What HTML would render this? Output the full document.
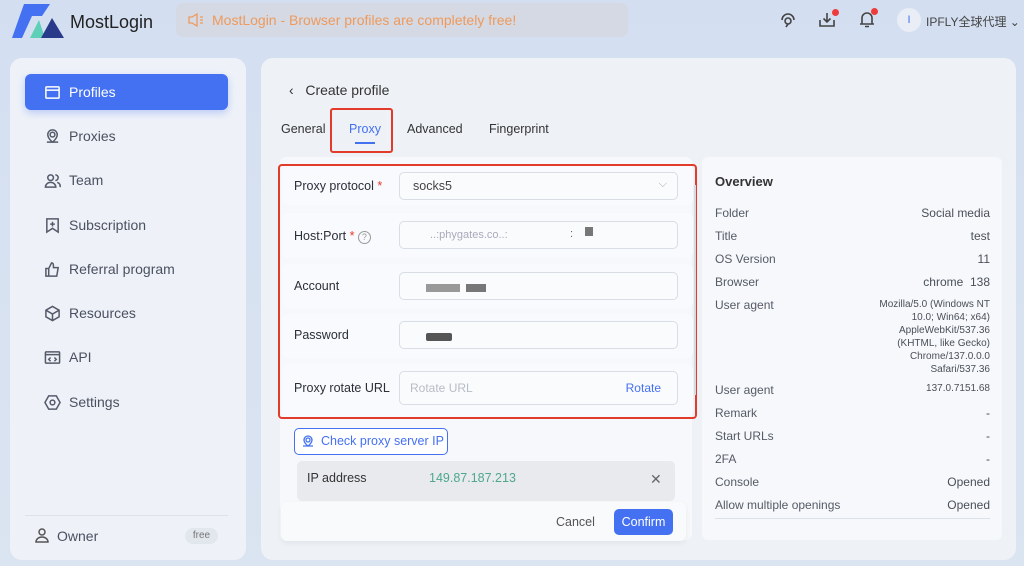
<!DOCTYPE html>
<html><head><meta charset="utf-8"><style>
*{box-sizing:border-box;margin:0;padding:0}
body{width:1024px;height:566px;overflow:hidden;background:linear-gradient(180deg,#d3dff1 0%,#dbe4f1 100%);font-family:"Liberation Sans","Noto Sans CJK SC",sans-serif;color:#333;position:relative;font-size:13px}
.abs{position:absolute}
.side{left:10px;top:58px;width:236px;height:502px;background:#eef2f8;border-radius:12px}
.nav{position:absolute;left:15px;width:203px;height:36px;display:flex;align-items:center;padding-left:19px;font-size:14px;color:#4a5060}
.nav svg{width:17px;height:17px;margin-right:8px;fill:none;stroke:#555b6a;stroke-width:1.6}
.nav.act{background:#4470f2;color:#fff;border-radius:6px;box-shadow:0 3px 8px rgba(68,112,242,.3)}
.nav.act svg{stroke:#fff}
.main{left:261px;top:58px;width:755px;height:502px;background:#eef2f7;border-radius:12px}
.row{position:absolute;left:282px;width:411px;background:#f8fafd;border-radius:6px}
.lbl{position:absolute;left:294px;font-size:12.5px;color:#2b2f38}
.inp{position:absolute;left:399px;width:279px;height:28px;border:1px solid #d8dde6;border-radius:5px;background:#fafbfd}
.ov{left:702px;top:157px;width:300px;height:383px;background:#f6f8fb;border-radius:6px}
.ovr{position:absolute;left:715px;width:275px;font-size:12px;color:#555b66;display:flex;justify-content:space-between}
.ovr span:last-child{text-align:right;color:#4a4f59}
</style></head><body>
<svg class="abs" style="left:10px;top:2px" width="56" height="38" viewBox="0 0 56 38">
<path d="M14 2 H40 L32 14 H22 L12 36 H2 Z" fill="#4470f2"/>
<path d="M20 36 L29 18 L35 36 Z" fill="#5fd0b7"/>
<path d="M31 36 L42 16 L54 36 Z" fill="#2a3a8a"/>
</svg>
<div class="abs" style="left:70px;top:12px;font-size:18px;color:#222">MostLogin</div>
<div class="abs" style="left:176px;top:3px;width:452px;height:34px;background:#d5d9e3;border-radius:7px;color:#ee9a5c;font-size:14px;line-height:34px;padding-left:36px">MostLogin - Browser profiles are completely free!</div>
<svg class="abs" style="left:188px;top:13px" width="16" height="14" viewBox="0 0 16 14" fill="none" stroke="#ee9a5c" stroke-width="1.3"><path d="M1 4h3l5-3v12l-5-3H1z"/><path d="M12 4h3M12 7h3M12 10h3"/></svg>
<svg class="abs" style="left:779px;top:11px" width="18" height="18" viewBox="0 0 18 18" fill="none" stroke="#444" stroke-width="1.6"><path d="M3 9a6 6 0 1 1 12 0"/><circle cx="9" cy="10" r="3"/><path d="M9 13l-2 3"/></svg>
<svg class="abs" style="left:818px;top:10px" width="18" height="18" viewBox="0 0 18 18" fill="none" stroke="#444" stroke-width="1.6"><path d="M2 10v6h14v-6M9 3v9M5.5 8.5L9 12l3.5-3.5"/></svg>
<div class="abs" style="left:832px;top:9px;width:7px;height:7px;border-radius:50%;background:#ee3b3b"></div>
<svg class="abs" style="left:858px;top:10px" width="18" height="18" viewBox="0 0 18 18" fill="none" stroke="#444" stroke-width="1.6"><path d="M4 14V8a5 5 0 0 1 10 0v6M2 14h14M7 16.5h4"/></svg>
<div class="abs" style="left:871px;top:8px;width:7px;height:7px;border-radius:50%;background:#ee3b3b"></div>
<div class="abs" style="left:897px;top:8px;width:24px;height:24px;border-radius:50%;background:#e8edf6;color:#4470f2;font-size:11px;text-align:center;line-height:24px">I</div>
<div class="abs" style="left:926px;top:13px;font-size:12px;color:#444">IPFLY全球代理 ⌄</div>

<div class="abs side"></div>
<div class="nav act" style="left:25px;top:74px"><svg viewBox="0 0 18 18"><rect x="2" y="3" width="14" height="12" rx="1"/><path d="M2 6.5h14"/></svg>Profiles</div>
<div class="nav" style="left:25px;top:118px"><svg viewBox="0 0 18 18"><circle cx="9" cy="7" r="2.5"/><path d="M9 15s-5-4-5-8a5 5 0 0 1 10 0c0 4-5 8-5 8zM3 15h12"/></svg>Proxies</div>
<div class="nav" style="left:25px;top:162px"><svg viewBox="0 0 18 18"><circle cx="7" cy="6" r="3"/><path d="M1.5 16a5.5 5 0 0 1 11 0zM12 3a3 3 0 0 1 0 6M14 11a4 4 0 0 1 3 5"/></svg>Team</div>
<div class="nav" style="left:25px;top:207px"><svg viewBox="0 0 18 18"><path d="M3 2h12v14l-6-4-6 4z M9 5v5M6.5 7.5h5"/></svg>Subscription</div>
<div class="nav" style="left:25px;top:251px"><svg viewBox="0 0 18 18"><path d="M2 8h3v8H2zM5 8l3-6c2 0 2 2 2 3v2h5l-1.5 9H5"/></svg>Referral program</div>
<div class="nav" style="left:25px;top:295px"><svg viewBox="0 0 18 18"><path d="M9 1.5l7 4v7l-7 4-7-4v-7zM2 5.5l7 4 7-4M9 9.5v7"/></svg>Resources</div>
<div class="nav" style="left:25px;top:339px"><svg viewBox="0 0 18 18"><rect x="1.5" y="3" width="15" height="12" rx="1"/><path d="M1.5 6h15M7 9l-2 2 2 2M11 9l2 2-2 2"/></svg>API</div>
<div class="nav" style="left:25px;top:384px"><svg viewBox="0 0 18 18"><path d="M5 2h8l4 7-4 7H5L1 9z"/><circle cx="9" cy="9" r="2.5"/></svg>Settings</div>
<div class="abs" style="left:25px;top:515px;width:203px;border-top:1px solid #dde2ea"></div>
<svg class="abs" style="left:34px;top:527px" width="16" height="16" viewBox="0 0 16 16" fill="none" stroke="#555" stroke-width="1.5"><circle cx="8" cy="5" r="3"/><path d="M2 15a6 5 0 0 1 12 0z"/></svg>
<div class="abs" style="left:57px;top:528px;font-size:14px;color:#4a5060">Owner</div>
<div class="abs" style="left:185px;top:528px;width:33px;height:16px;border-radius:8px;background:#e2e6ed;font-size:10px;color:#777;text-align:center;line-height:16px">free</div>

<div class="abs main"></div>
<div class="abs" style="left:289px;top:82px;font-size:14px;color:#333">‹&nbsp;&nbsp;&nbsp;Create profile</div>
<div class="abs" style="left:281px;top:122px;font-size:12.5px;color:#333">General</div>
<div class="abs" style="left:330px;top:108px;width:63px;height:45px;border:2px solid #e33b2b;border-radius:3px"></div>
<div class="abs" style="left:349px;top:122px;font-size:12.5px;color:#4470f2">Proxy</div>
<div class="abs" style="left:355px;top:142px;width:20px;height:2px;background:#4470f2"></div>
<div class="abs" style="left:407px;top:122px;font-size:12.5px;color:#333">Advanced</div>
<div class="abs" style="left:489px;top:122px;font-size:12.5px;color:#333">Fingerprint</div>

<div class="abs" style="left:280px;top:157px;width:412px;height:383px;background:#f6f8fb;border-radius:6px"></div>
<div class="row" style="top:165px;height:40px"></div>
<div class="row" style="top:213px;height:45px"></div>
<div class="row" style="top:264px;height:44px"></div>
<div class="row" style="top:314px;height:44px"></div>
<div class="row" style="top:364px;height:52px"></div>
<div class="lbl" style="top:179px">Proxy protocol<span style="color:#e33b2b"> *</span></div>
<div class="inp" style="top:172px"><span style="position:absolute;left:13px;top:6px;font-size:12.5px;color:#444">socks5</span><span style="position:absolute;right:10px;top:5px;color:#aaa;font-size:11px">⌵</span></div>
<div class="lbl" style="top:229px">Host:Port<span style="color:#e33b2b"> *</span> <span style="display:inline-block;width:13px;height:13px;border:1px solid #999;border-radius:50%;font-size:9px;text-align:center;line-height:11px;color:#999">?</span></div>
<div class="inp" style="top:221px"><span style="position:absolute;left:30px;top:7px;font-size:11px;color:#aab">..:phygates.co..:</span><span style="position:absolute;left:170px;top:6px;font-size:11px;color:#666">:</span><span style="position:absolute;left:185px;top:5px;width:8px;height:9px;background:#777"></span></div>
<div class="lbl" style="top:279px">Account</div>
<div class="inp" style="top:272px"><span style="position:absolute;left:26px;top:11px;width:34px;height:8px;background:#999"></span><span style="position:absolute;left:66px;top:11px;width:20px;height:8px;background:#777"></span></div>
<div class="lbl" style="top:328px">Password</div>
<div class="inp" style="top:321px"><span style="position:absolute;left:26px;top:11px;width:26px;height:8px;background:#555;border-radius:2px"></span></div>
<div class="lbl" style="top:381px">Proxy rotate URL</div>
<div class="inp" style="top:371px;height:34px"><span style="position:absolute;left:10px;top:9px;font-size:12px;color:#b8bcc6">Rotate URL</span><span style="position:absolute;right:16px;top:9px;font-size:12px;color:#4470f2">Rotate</span></div>
<div class="abs" style="left:278px;top:164px;width:419px;height:255px;border:2px solid #e33b2b;border-radius:4px"></div>
<div class="abs" style="left:694px;top:185px;width:2px;height:210px;background:#d6dae1"></div>

<div class="abs" style="left:294px;top:428px;width:154px;height:27px;border:1px solid #4470f2;border-radius:5px;background:#fff;color:#4470f2;font-size:12.5px;line-height:25px;padding-left:26px">Check proxy server IP</div>
<svg class="abs" style="left:302px;top:435px" width="12" height="12" viewBox="0 0 12 12" fill="none" stroke="#4470f2" stroke-width="1.3"><circle cx="6" cy="5" r="2"/><path d="M6 11S2 8 2 5a4 4 0 0 1 8 0c0 3-4 6-4 6zM1 11h10"/></svg>
<div class="abs" style="left:297px;top:461px;width:378px;height:40px;background:#e8eaee;border-radius:5px"></div>
<div class="abs" style="left:307px;top:471px;font-size:12.5px;color:#333">IP address</div>
<div class="abs" style="left:429px;top:471px;font-size:12.5px;color:#4ea889">149.87.187.213</div>
<div class="abs" style="left:650px;top:471px;font-size:14px;color:#666">✕</div>
<div class="abs" style="left:281px;top:502px;width:405px;height:39px;background:#f9fafc;border-radius:6px;box-shadow:0 2px 6px rgba(0,0,0,.06)"></div>
<div class="abs" style="left:556px;top:515px;font-size:12.5px;color:#555">Cancel</div>
<div class="abs" style="left:614px;top:509px;width:59px;height:26px;background:#4470f2;border-radius:5px;color:#fff;font-size:12.5px;text-align:center;line-height:26px">Confirm</div>

<div class="abs ov"></div>
<div class="abs" style="left:715px;top:174px;font-size:13px;font-weight:bold;color:#333">Overview</div>
<div class="ovr" style="top:206px"><span>Folder</span><span>Social media</span></div>
<div class="ovr" style="top:229px"><span>Title</span><span>test</span></div>
<div class="ovr" style="top:252px"><span>OS Version</span><span>11</span></div>
<div class="ovr" style="top:275px"><span>Browser</span><span>chrome&nbsp; 138</span></div>
<div class="ovr" style="top:298px"><span>User agent</span><span style="font-size:10px;line-height:13px">Mozilla/5.0 (Windows NT<br>10.0; Win64; x64)<br>AppleWebKit/537.36<br>(KHTML, like Gecko)<br>Chrome/137.0.0.0<br>Safari/537.36</span></div>
<div class="ovr" style="top:383px"><span>User agent</span><span style="font-size:10px">137.0.7151.68</span></div>
<div class="ovr" style="top:406px"><span>Remark</span><span>-</span></div>
<div class="ovr" style="top:429px"><span>Start URLs</span><span>-</span></div>
<div class="ovr" style="top:452px"><span>2FA</span><span>-</span></div>
<div class="ovr" style="top:475px"><span>Console</span><span>Opened</span></div>
<div class="ovr" style="top:498px"><span>Allow multiple openings</span><span>Opened</span></div>
<div class="abs" style="left:715px;top:518px;width:275px;border-top:1px solid #dde1e8"></div>
</body></html>
